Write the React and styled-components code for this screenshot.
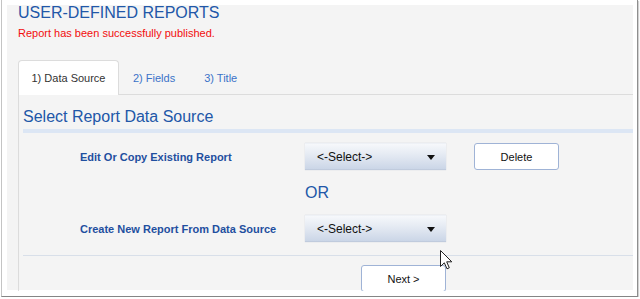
import React from 'react';
import styled, { createGlobalStyle } from 'styled-components';

const GlobalStyle = createGlobalStyle`
  html, body {
    margin: 0;
    padding: 0;
    background: #ffffff;
  }
  body {
    font-family: "Liberation Sans", Arial, sans-serif;
  }
`;

function Cursor() {
  return (
    <CursorSvg width="13" height="20" viewBox="0 0 13 20">
      <path
        d="M0.5 0.5 L0.5 16.5 L4.3 12.8 L7 18.8 L9.3 17.8 L6.7 11.8 L11.8 11.8 Z"
        fill="#ffffff"
        stroke="#222"
        strokeWidth="1"
        strokeLinejoin="miter"
      />
    </CursorSvg>
  );
}

function Dropdown() {
  return (
    <Select>
      <span>&lt;-Select-&gt;</span>
      <Caret />
    </Select>
  );
}

function App() {
  return (
    <>
      <GlobalStyle />
      <Frame>
        <Panel>
          <Title>USER-DEFINED REPORTS</Title>
          <Message>Report has been successfully published.</Message>
          <Tabs>
            <Tab active>1) Data Source</Tab>
            <Tab>2) Fields</Tab>
            <Tab>3) Title</Tab>
          </Tabs>
          <TabBody>
            <Section>
              <Heading>Select Report Data Source</Heading>
              <Row>
                <Label>Edit Or Copy Existing Report</Label>
                <Dropdown />
                <Button>Delete</Button>
              </Row>
              <Or>OR</Or>
              <Row>
                <Label>Create New Report From Data Source</Label>
                <Dropdown />
              </Row>
              <Divider />
              <Footer>
                <Button $flush>Next &gt;</Button>
              </Footer>
            </Section>
          </TabBody>
          <Cursor />
        </Panel>
      </Frame>
    </>
  );
}

export default App;

const Frame = styled.div`
  margin-left: 1px;
  width: 626px;
  height: 290px;
  padding: 6px 4px 0 5px;
  border-left: 1px solid #c4c4c4;
  border-right: 1px solid #8e8e8e;
  border-bottom: 1px solid #858585;
  box-shadow: 1px 1px 1px rgba(0, 0, 0, 0.18);
`;

const Panel = styled.div`
  position: relative;
  height: 285px;
  background: #f4f4f4;
  padding-left: 11px;
`;

const Title = styled.div`
  margin-top: -1px;
  font-size: 16px;
  line-height: 16px;
  color: #2157a8;
`;

const Message = styled.div`
  margin-top: 6px;
  font-size: 11px;
  line-height: 13px;
  color: #f20d0d;
`;

const Tabs = styled.div`
  display: flex;
  margin-top: 20px;
  border-bottom: 1px solid #dcdcdc;
  height: 34px;
`;

const Tab = styled.div`
  display: flex;
  align-items: center;
  justify-content: center;
  box-sizing: border-box;
  height: ${(p) => (p.active ? '35px' : '34px')};
  padding: ${(p) => (p.active ? '0 12px' : '0 14px')};
  white-space: nowrap;
  font-size: 11px;
  color: ${(p) => (p.active ? '#333333' : '#3a72c8')};
  background: ${(p) => (p.active ? '#ffffff' : 'transparent')};
  border: 1px solid ${(p) => (p.active ? '#dcdcdc' : 'transparent')};
  border-bottom: none;
  border-radius: 4px 4px 0 0;
  margin-left: ${(p) => (p.active ? '0' : '-1px')};
  width: ${(p) => (p.active ? '101px' : 'auto')};
`;

const TabBody = styled.div`
  border-left: 1px solid #dcdcdc;
  height: 196px;
`;

const Section = styled.div`
  margin-left: 4px;
  padding-top: 14px;
`;

const Heading = styled.div`
  font-size: 16px;
  line-height: 16px;
  color: #2157a8;
  padding-bottom: 4px;
  border-bottom: 4px solid #dce6f4;
`;

const Row = styled.div`
  display: flex;
  align-items: center;
  margin-top: 10px;
  padding-left: 57px;
  height: 27px;

  & + & {
    margin-top: 0;
  }
`;

const Label = styled.div`
  width: 225px;
  font-size: 11px;
  font-weight: bold;
  color: #1f4f9f;
`;

const Select = styled.div`
  display: flex;
  align-items: center;
  justify-content: space-between;
  box-sizing: border-box;
  width: 141px;
  height: 27px;
  padding: 0 11px 0 12px;
  font-size: 12px;
  color: #111;
  background: linear-gradient(#f6f8fb, #e3e9f2 45%, #c9d4e6);
  border-top: 1px solid #eef1f6;
  box-shadow: inset 0 -1px 0 #c0cbdd, 0 0 1px rgba(120, 140, 170, 0.35);
`;

const Caret = styled.span`
  width: 0;
  height: 0;
  border-left: 4px solid transparent;
  border-right: 4px solid transparent;
  border-top: 5px solid #111;
`;

const Button = styled.div`
  display: flex;
  align-items: center;
  justify-content: center;
  flex-shrink: 0;
  box-sizing: border-box;
  width: 85px;
  height: 27px;
  margin-left: ${(p) => (p.$flush ? '0' : '28px')};
  font-size: 11px;
  color: #111;
  background: #ffffff;
  border: 1px solid #9fb3d6;
  border-radius: 3px;
`;

const Or = styled.div`
  margin: 15px 0 14px 282px;
  font-size: 16px;
  line-height: 16px;
  color: #2157a8;
`;

const Divider = styled.div`
  margin-top: 13px;
  height: 1px;
  background: #d8dfe9;
`;

const Footer = styled.div`
  display: flex;
  margin-top: 9px;
  padding-left: 338px;
  height: 26px;
  overflow: hidden;
`;

const CursorSvg = styled.svg`
  position: absolute;
  left: 433px;
  top: 245px;
`;
